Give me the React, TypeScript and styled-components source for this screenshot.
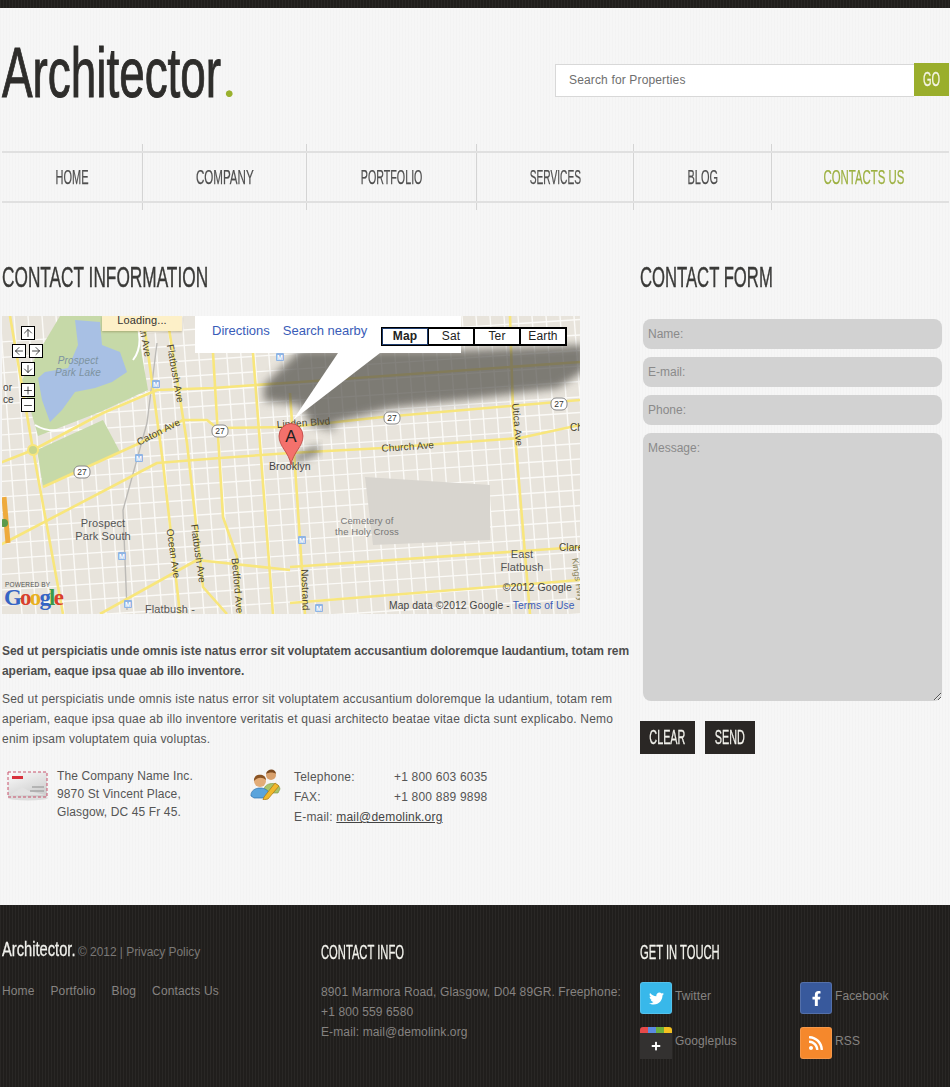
import React from "react"
import styled, { createGlobalStyle } from "styled-components"
import { ArrowDown, ArrowLeft, ArrowRight, ArrowUp, Minus, Plus } from "lucide-react"
import { FaFacebookF, FaPlus, FaRss, FaTwitter } from "react-icons/fa"

const condensed = `"Liberation Sans Narrow", "Liberation Sans", sans-serif`

const GlobalStyle = createGlobalStyle`
  html, body { margin: 0; padding: 0; }
  body {
    font-family: "Liberation Sans", Arial, sans-serif;
    font-size: 12px;
    letter-spacing: 0.12px;
    color: #555;
    background-color: #f6f6f6;
    background-image: repeating-linear-gradient(90deg, rgba(0,0,0,.012) 0 1px, transparent 1px 3px);
  }
`

const navItems = [
  { label: "HOME", width: 141, scale: 0.55 },
  { label: "COMPANY", width: 164, scale: 0.58 },
  { label: "PORTFOLIO", width: 170, scale: 0.535 },
  { label: "SERVICES", width: 157, scale: 0.51 },
  { label: "BLOG", width: 138, scale: 0.55 },
  { label: "CONTACTS US", width: 177, scale: 0.57, active: true }
]

function range(from: number, to: number, step: number) {
  const out: number[] = []
  for (let v = from; v <= to; v += step) out.push(v)
  return out
}

const yellowRoads = [
  "M10 316 L33 450 L63 614",
  "M0 463 L33 450 L103 413 L157 390 L213 388 L300 382 L580 362",
  "M43 487 L140 443 L183 420 L207 420 L217 428 L290 427 L383 417 L580 400",
  "M0 545 L10 540 L157 463 L220 458 L290 453 L383 448 L520 438 L580 425",
  "M143 316 L163 463 L180 614",
  "M167 316 L187 443 L203 587 L227 614",
  "M213 353 L223 517 L237 557 L240 614",
  "M253 353 L273 614",
  "M290 393 L305 614",
  "M510 316 L513 410 L530 614",
  "M290 567 L580 547",
  "M100 614 L197 560 L290 570",
  "M290 603 L580 580"
]

const labels: { t: string; x: number; y: number; r?: number; s?: number; c?: string; a?: "middle" | "start" | "end"; i?: boolean }[] = [
  { t: "Prospect", x: 78, y: 364, s: 10, c: "#7d93a0", a: "middle", i: true },
  { t: "Park Lake", x: 78, y: 376, s: 10, c: "#7d93a0", a: "middle", i: true },
  { t: "Caton Ave", x: 160, y: 435, r: -27, s: 10, c: "#4a4630", a: "middle" },
  { t: "Flatbush Ave", x: 172, y: 374, r: 80, s: 10, c: "#4a4630", a: "middle" },
  { t: "an Ave", x: 142, y: 342, r: 80, s: 10, c: "#4a4630", a: "middle" },
  { t: "Ocean Ave", x: 170, y: 554, r: 82, s: 10, c: "#4a4630", a: "middle" },
  { t: "Flatbush Ave", x: 195, y: 554, r: 82, s: 10, c: "#4a4630", a: "middle" },
  { t: "Bedford Ave", x: 234, y: 586, r: 85, s: 10, c: "#4a4630", a: "middle" },
  { t: "Prospect", x: 103, y: 527, s: 11, a: "middle" },
  { t: "Park South", x: 103, y: 540, s: 11, a: "middle" },
  { t: "Flatbush -", x: 170, y: 613, s: 11, a: "middle" },
  { t: "Brooklyn", x: 269, y: 470, s: 10.5, c: "#444" },
  { t: "Linden Blvd", x: 277, y: 428, r: -4, s: 10, c: "#4a4630" },
  { t: "Church Ave", x: 408, y: 450, r: -4, s: 10, c: "#4a4630", a: "middle" },
  { t: "Utica Ave", x: 514, y: 425, r: 85, s: 10, c: "#4a4630", a: "middle" },
  { t: "Cemetery of", x: 367, y: 524, s: 9.5, c: "#777", a: "middle" },
  { t: "the Holy Cross", x: 367, y: 535, s: 9.5, c: "#777", a: "middle" },
  { t: "East", x: 522, y: 558, s: 11, a: "middle" },
  { t: "Flatbush", x: 522, y: 571, s: 11, a: "middle" },
  { t: "©2012 Google", x: 572, y: 591, s: 10.5, c: "#444", a: "end" },
  { t: "Clare", x: 559, y: 551, s: 10, c: "#4a4630" },
  { t: "Ch", x: 570, y: 431, s: 10, c: "#4a4630" },
  { t: "Nostrand", x: 302, y: 590, r: 88, s: 10, c: "#4a4630", a: "middle" },
  { t: "Kings Hwy", x: 575, y: 580, r: 82, s: 9, c: "#8a8560", a: "middle" },
  { t: "or", x: 3, y: 391, s: 10, c: "#444" },
  { t: "ce", x: 3, y: 403, s: 10, c: "#444" }
]

const shields = [
  [82, 472],
  [220, 431],
  [392, 418],
  [559, 404]
]

const metros = [
  [156, 384],
  [139, 458],
  [122, 556],
  [128, 604],
  [280, 357],
  [302, 540],
  [319, 608]
]

function MapDrawing() {
  return (
    <MapSvg viewBox="2 316 578 298" width="578" height="298">
      <defs>
        <filter id="blur" x="-10%" y="-30%" width="120%" height="160%">
          <feGaussianBlur stdDeviation="4" />
        </filter>
      </defs>
      <rect x="0" y="316" width="580" height="298" fill="#e8e4dc" />
      <g stroke="#fbfaf7" strokeWidth="1.4" fill="none">
        {range(326, 640, 15.5).map(y => (
          <line key={y} x1="0" y1={y + 16} x2="580" y2={y - 22} />
        ))}
        {range(0, 590, 14).map(x => (
          <line key={x} x1={x} y1="316" x2={x + 22} y2="614" />
        ))}
      </g>
      <path d="M365 477 L490 485 L490 540 L373 545 Z" fill="#d8d5cf" />
      <path d="M60 316 L135 316 L148 390 L100 412 L38 436 L22 380 Z" fill="#c6d9a8" />
      <path d="M37 450 L103 420 L120 452 L43 487 Z" fill="#c6d9a8" />
      <path
        d="M75 320 L100 322 L102 345 L120 352 L127 372 L112 382 L95 388 L75 392 L62 410 L50 422 L42 400 L38 378 L45 372 L68 368 L78 345 Z"
        fill="#a8c0e4"
      />
      <path d="M35 425 Q60 440 103 413 L150 392 M135 316 Q145 345 133 360" stroke="#fff" strokeWidth="2" fill="none" />
      <path d="M157 343 L147 423 L123 510 L127 610" stroke="#bcbab6" strokeWidth="1.4" fill="none" />
      <g stroke="#f8e67c" strokeWidth="2.6" fill="none" strokeLinejoin="round">
        {yellowRoads.map(d => (
          <path key={d} d={d} />
        ))}
      </g>
      <circle cx="33" cy="450" r="5" fill="#c8d58c" stroke="#f8e67c" strokeWidth="2" />
      <path d="M4 497 L8 543" stroke="#eeaa3c" strokeWidth="5" />
      <circle cx="4" cy="523" r="4" fill="#5c9a4c" />
      <path
        d="M300 350 L470 350 L585 345 L585 370 L558 388 L480 398 L390 408 L330 424 L338 432 L312 425 L300 405 L264 401 L264 385 Z"
        fill="#55524e"
        opacity=".72"
        filter="url(#blur)"
      />
      <path d="M292 458 L318 445 L320 452 L298 462 Z" fill="#4a4844" opacity=".75" filter="url(#blur)" />
      {shields.map(([x, y]) => (
        <g key={x}>
          <rect x={x - 8} y={y - 6} width="16" height="12" rx="5" fill="#fff" stroke="#888" />
          <text x={x} y={y + 3} fontSize="8.5" fill="#333" textAnchor="middle" fontFamily="Liberation Sans">
            27
          </text>
        </g>
      ))}
      {metros.map(([x, y]) => (
        <g key={x}>
          <rect x={x - 4} y={y - 4} width="8" height="8" rx="1" fill="#8fb4e4" />
          <text x={x} y={y + 3} fontSize="7" fontWeight="bold" fill="#fff" textAnchor="middle" fontFamily="Liberation Sans">
            M
          </text>
        </g>
      ))}
      {labels.map(l => (
        <text
          key={l.t + l.x}
          x={l.x}
          y={l.y}
          fontSize={l.s || 10}
          fill={l.c || "#555"}
          textAnchor={l.a || "start"}
          fontStyle={l.i ? "italic" : "normal"}
          fontFamily="Liberation Sans"
          transform={l.r ? `rotate(${l.r} ${l.x} ${l.y})` : undefined}
        >
          {l.t}
        </text>
      ))}
      <path
        d="M291 465 C289 452 279 447 279 436 A12 12.5 0 1 1 303 436 C303 447 293 452 291 465 Z"
        fill="#f4716c"
        stroke="#b8403c"
        strokeWidth=".8"
      />
      <text x="291" y="442" fontSize="17" fill="#222" textAnchor="middle" fontFamily="Liberation Sans">
        A
      </text>
      <text x="389" y="609" fontSize="10.25" fill="#444" fontFamily="Liberation Sans">
        Map data ©2012 Google - <tspan fill="#3a5cb8">Terms of Use</tspan>
      </text>
      <text x="5" y="587" fontSize="6.5" fill="#555" fontFamily="Liberation Sans">
        POWERED BY
      </text>
      <text x="4" y="605" fontSize="23" fontWeight="bold" fontFamily="Liberation Serif" textLength="60">
        <tspan fill="#3564c4">G</tspan>
        <tspan fill="#d8402c">o</tspan>
        <tspan fill="#e8b020">o</tspan>
        <tspan fill="#3564c4">g</tspan>
        <tspan fill="#3a9a48">l</tspan>
        <tspan fill="#d8402c">e</tspan>
      </text>
    </MapSvg>
  )
}

function EnvelopeIcon() {
  return (
    <svg width="42" height="32" viewBox="0 0 42 32">
      <defs>
        <linearGradient id="envelope" x1="0" y1="0" x2="0.6" y2="1">
          <stop offset="0" stopColor="#fbfbfb" />
          <stop offset="1" stopColor="#cfcfcf" />
        </linearGradient>
      </defs>
      <ellipse cx="21" cy="28" rx="20" ry="2.5" fill="#ddd" />
      <rect x="1" y="2" width="39" height="25" fill="url(#envelope)" stroke="#c8506a" strokeDasharray="3 2" />
      <rect x="5" y="6" width="11" height="3" fill="#d8323c" />
      <path d="M3 25 L15 17 L22 21 L38 25 Z" fill="#e2e2e2" />
      <path d="M25 17 H37 M23 21 H37" stroke="#8d8d8d" strokeWidth="1.2" />
    </svg>
  )
}

function PeopleIcon() {
  return (
    <svg width="32" height="32" viewBox="0 0 32 32">
      <path d="M14 22 C14 14 29 13 30 21 L28 25 H16 Z" fill="#a8c46c" stroke="#78923c" strokeWidth=".6" />
      <circle cx="21" cy="7" r="5" fill="#d8a06c" />
      <path d="M16 6 C17 0 26 0 26 6 C24 4 19 4 16 6 Z" fill="#7c4a20" />
      <path d="M1 28 C0 18 18 17 20 27 L17 30 H4 Z" fill="#5aa4dc" stroke="#2c70ac" strokeWidth=".7" />
      <circle cx="10" cy="13" r="6" fill="#e2ac78" />
      <path d="M4 13 C3 5 16 5 16 12 C12 9 8 9 4 13 Z" fill="#8a5424" />
      <path d="M14 29 L25 15 L29 18 L18 31 L13 32 Z" fill="#f0b82c" stroke="#a87414" strokeWidth=".7" />
    </svg>
  )
}

export default function App() {
  return (
    <>
      <GlobalStyle />
      <TopBar />
      <Header>
        <Logo href="#">
          Architector<LogoDot>.</LogoDot>
        </Logo>
        <SearchForm>
          <SearchInput placeholder="Search for Properties" />
          <SearchButton type="button">
            <span>GO</span>
          </SearchButton>
        </SearchForm>
      </Header>
      <Nav>
        {navItems.map(item => (
          <NavItem key={item.label} $width={item.width} $active={item.active}>
            <span style={{ transform: `scaleX(${item.scale})` }}>{item.label}</span>
          </NavItem>
        ))}
      </Nav>
      <Main>
        <section>
          <Heading $scale={0.595}>CONTACT INFORMATION</Heading>
          <MapBox>
            <MapDrawing />
            <LoadingBox>Loading...</LoadingBox>
            <MapControls>
              <MapButton $col={2} $row={1}><ArrowUp size={12} /></MapButton>
              <MapButton $col={1} $row={2}><ArrowLeft size={12} /></MapButton>
              <MapButton $col={3} $row={2}><ArrowRight size={12} /></MapButton>
              <MapButton $col={2} $row={3}><ArrowDown size={12} /></MapButton>
              <MapButton $col={2} $row={4} $gap><Plus size={13} /></MapButton>
              <MapButton $col={2} $row={5}><Minus size={13} /></MapButton>
            </MapControls>
            <InfoWindow>
              <InfoLink>Directions</InfoLink>
              <InfoLink>Search nearby</InfoLink>
            </InfoWindow>
            <InfoTail />
            <MapTypes>
              <MapType $active>Map</MapType>
              <MapType>Sat</MapType>
              <MapType>Ter</MapType>
              <MapType>Earth</MapType>
            </MapTypes>
          </MapBox>
          <Lead>
            Sed ut perspiciatis unde omnis iste natus error sit voluptatem accusantium doloremque laudantium, totam rem
            aperiam, eaque ipsa quae ab illo inventore.
          </Lead>
          <Body>
            Sed ut perspiciatis unde omnis iste natus error sit voluptatem accusantium doloremque la udantium, totam rem
            aperiam, eaque ipsa quae ab illo inventore veritatis et quasi architecto beatae vitae dicta sunt explicabo. Nemo
            enim ipsam voluptatem quia voluptas.
          </Body>
          <ContactRow>
            <AddressBlock>
              <EnvelopeIcon />
              <Address>
                The Company Name Inc.
                <br />
                9870 St Vincent Place,
                <br />
                Glasgow, DC 45 Fr 45.
              </Address>
            </AddressBlock>
            <PhoneBlock>
              <PeopleIcon />
              <PhoneTable>
                <span>Telephone:</span>
                <span>+1 800 603 6035</span>
                <span>FAX:</span>
                <span>+1 800 889 9898</span>
                <PhoneEmail>
                  E-mail: <a href="#">mail@demolink.org</a>
                </PhoneEmail>
              </PhoneTable>
            </PhoneBlock>
          </ContactRow>
        </section>
        <section>
          <Heading $scale={0.575}>CONTACT FORM</Heading>
          <Form>
            <Field placeholder="Name:" />
            <Field placeholder="E-mail:" />
            <Field placeholder="Phone:" />
            <MessageField placeholder="Message:" />
          </Form>
          <FormButtons>
            <DarkButton type="button" $width={55}>
              <span>CLEAR</span>
            </DarkButton>
            <DarkButton type="button" $width={50}>
              <span>SEND</span>
            </DarkButton>
          </FormButtons>
        </section>
      </Main>
      <Footer>
        <FooterColumn>
          <FooterBrand>
            <FooterLogo>Architector.</FooterLogo>
            <span>© 2012 | Privacy Policy</span>
          </FooterBrand>
          <FooterLinks>
            <a href="#">Home</a>
            <a href="#">Portfolio</a>
            <a href="#">Blog</a>
            <a href="#">Contacts Us</a>
          </FooterLinks>
        </FooterColumn>
        <FooterColumn>
          <FooterHeading>CONTACT INFO</FooterHeading>
          <FooterText>
            8901 Marmora Road, Glasgow, D04 89GR. Freephone:
            <br />
            +1 800 559 6580
            <br />
            E-mail: mail@demolink.org
          </FooterText>
        </FooterColumn>
        <FooterColumn>
          <FooterHeading>GET IN TOUCH</FooterHeading>
          <SocialGrid>
            <SocialItem>
              <SocialTile $bg="#38b8ea"><FaTwitter size={15} /></SocialTile>
              Twitter
            </SocialItem>
            <SocialItem>
              <SocialTile $bg="#38599c"><FaFacebookF size={15} /></SocialTile>
              Facebook
            </SocialItem>
            <SocialItem>
              <GoogleTile><FaPlus size={10} /></GoogleTile>
              Googleplus
            </SocialItem>
            <SocialItem>
              <SocialTile $bg="#f5882c"><FaRss size={16} /></SocialTile>
              RSS
            </SocialItem>
          </SocialGrid>
        </FooterColumn>
      </Footer>
    </>
  )
}

const darkStripes = `
  background-color: #232120;
  background-image: repeating-linear-gradient(90deg, #292725 0 1px, #201e1c 1px 3px);
`

const TopBar = styled.div`
  height: 8px;
  ${darkStripes}
`

const Header = styled.header`
  height: 136px;
  display: flex;
  justify-content: space-between;
  padding: 0 1px 0 2px;
`

const Logo = styled.a`
  display: inline-block;
  margin-top: 25px;
  height: 80px;
  font-family: ${condensed};
  font-size: 70px;
  line-height: 80px;
  letter-spacing: 0;
  color: #2e2d2b;
  -webkit-text-stroke: 1px #2e2d2b;
  text-decoration: none;
  transform: scaleX(0.655);
  transform-origin: left;
  white-space: nowrap;
`

const LogoDot = styled.span`
  display: inline-block;
  font-family: Lato, sans-serif;
  font-size: 44px;
  font-weight: bold;
  color: #9ab12e;
  -webkit-text-stroke: 0;
  margin-left: 4px;
  transform: scaleX(1.53);
  transform-origin: left;
`

const SearchForm = styled.form`
  display: flex;
  margin: 55px 0 0;
  height: 34px;
`

const SearchInput = styled.input`
  width: 359px;
  height: 33px;
  margin-top: 1px;
  box-sizing: border-box;
  padding: 0 13px 2px;
  border: 1px solid #d8d8d8;
  border-right: 0;
  background: #fff;
  font: 12px "Liberation Sans", sans-serif;
  letter-spacing: 0.15px;
  &::placeholder {
    color: #6e6e6e;
    opacity: 1;
  }
`

const SearchButton = styled.button`
  width: 35px;
  height: 33px;
  border: 0;
  padding: 0;
  background: #9aae2c;
  color: #f4f4e4;
  font-family: ${condensed};
  font-size: 20px;
  span {
    display: inline-block;
    transform: scaleX(0.55);
    -webkit-text-stroke: 0.3px #f4f4e4;
  }
`

const Nav = styled.nav`
  display: flex;
  margin: 0 1px 0 2px;
  height: 66px;
  box-sizing: border-box;
  position: relative;
  &::before,
  &::after {
    content: "";
    position: absolute;
    left: 0;
    right: 0;
    height: 2px;
    background: #e0e0e0;
  }
  &::before {
    top: 7px;
  }
  &::after {
    bottom: 7px;
  }
`

const NavItem = styled.div<{ $width: number; $active?: boolean }>`
  width: ${p => p.$width}px;
  flex: none;
  display: flex;
  align-items: center;
  justify-content: center;
  box-sizing: border-box;
  padding-left: ${p => (p.$active ? "7px" : "0")};
  border-right: ${p => (p.$active ? "0" : "1px solid #d4d4d4")};
  font-family: ${condensed};
  font-size: 20px;
  letter-spacing: 0;
  color: ${p => (p.$active ? "#9cb040" : "#4f4f4f")};
  span {
    display: inline-block;
    -webkit-text-stroke: 0.25px currentColor;
    white-space: nowrap;
  }
`

const Main = styled.main`
  height: 695px;
  display: grid;
  grid-template-columns: 638px 1fr;
  padding-left: 2px;
  box-sizing: border-box;
`

const Heading = styled.h2<{ $scale: number }>`
  margin: 52px 0 23px;
  height: 31px;
  font-family: ${condensed};
  font-size: 29px;
  line-height: 31px;
  font-weight: normal;
  letter-spacing: 0;
  color: #3a3a38;
  -webkit-text-stroke: 0.4px #3a3a38;
  transform: scaleX(${p => p.$scale});
  transform-origin: left;
  white-space: nowrap;
`

const MapBox = styled.div`
  position: relative;
  width: 578px;
  height: 298px;
  overflow: hidden;
`

const MapSvg = styled.svg`
  display: block;
`

const LoadingBox = styled.div`
  position: absolute;
  left: 100px;
  top: 0;
  width: 80px;
  height: 15px;
  background: #fdf0c8;
  box-shadow: 0 1px 2px rgba(120, 100, 40, 0.4);
  text-align: center;
  font-size: 11px;
  line-height: 8px;
  color: #333;
`

const MapControls = styled.div`
  position: absolute;
  left: 10px;
  top: 10px;
  display: grid;
  grid-template-columns: 9px 8px 14px;
  grid-auto-rows: 14px;
  row-gap: 4px;
`

const MapButton = styled.div<{ $col: number; $row: number; $gap?: boolean }>`
  grid-column: ${p => p.$col};
  grid-row: ${p => p.$row};
  margin-top: ${p => (p.$gap ? "3px" : "0")};
  width: 14px;
  height: 14px;
  box-sizing: border-box;
  border: 1px solid #000;
  background: #fff;
  display: flex;
  align-items: center;
  justify-content: center;
  color: #111;
  svg {
    stroke-width: 1.5;
  }
`

const InfoWindow = styled.div`
  position: absolute;
  left: 193px;
  top: 0;
  width: 266px;
  height: 37px;
  box-sizing: border-box;
  padding: 7px 0 0 17px;
  background: #fff;
  display: flex;
  gap: 13px;
`

const InfoLink = styled.span`
  color: #3a5cb8;
  font-size: 13px;
  letter-spacing: 0;
  line-height: 16px;
`

const InfoTail = styled.div`
  position: absolute;
  left: 291px;
  top: 37px;
  width: 90px;
  height: 67px;
  background: #fff;
  clip-path: polygon(45px 0, 87px 0, 0 67px);
`

const MapTypes = styled.div`
  position: absolute;
  left: 379px;
  top: 11px;
  display: flex;
  border: 1px solid #000;
  background: #fff;
`

const MapType = styled.div<{ $active?: boolean }>`
  width: 46px;
  height: 17px;
  box-sizing: border-box;
  border: 1px solid ${p => (p.$active ? "#1c3a6c" : "#000")};
  text-align: center;
  font-size: 12px;
  line-height: 15px;
  font-weight: ${p => (p.$active ? "bold" : "normal")};
  color: #222;
`

const Lead = styled.p`
  margin: 27px 0 8px;
  font-size: 12px;
  line-height: 20px;
  font-weight: bold;
  letter-spacing: -0.06px;
  color: #4e4e4e;
`

const Body = styled.p`
  margin: 0;
  font-size: 12px;
  line-height: 20px;
  letter-spacing: 0.21px;
  width: 626px;
  color: #555;
`

const ContactRow = styled.div`
  display: flex;
  margin-top: 17px;
`

const AddressBlock = styled.div`
  width: 248px;
  display: flex;
  gap: 8px;
  padding: 4px 0 0 5px;
  box-sizing: border-box;
  align-items: flex-start;
`

const Address = styled.div`
  line-height: 18px;
  margin-top: -3px;
`

const PhoneBlock = styled.div`
  display: flex;
  gap: 12px;
  align-items: flex-start;
  padding-top: 2px;
`

const PhoneTable = styled.div`
  display: grid;
  grid-template-columns: 100px auto;
  line-height: 20px;
  margin-top: -1px;
  letter-spacing: 0.2px;
`

const PhoneEmail = styled.div`
  grid-column: 1 / span 2;
  a {
    color: #444;
  }
`

const Form = styled.form`
  display: flex;
  flex-direction: column;
  gap: 8px;
  padding: 3px 0 0 3px;
  width: 299px;
`

const fieldStyles = `
  width: 299px;
  box-sizing: border-box;
  border: 0;
  border-radius: 8px;
  background: #d2d2d2;
  padding: 0 5px;
  font: 12px "Liberation Sans", sans-serif;
  color: #555;
  &::placeholder {
    color: #8a8a8a;
    opacity: 1;
  }
`

const Field = styled.input`
  ${fieldStyles}
  height: 30px;
`

const MessageField = styled.textarea`
  ${fieldStyles}
  height: 268px;
  padding-top: 8px;
  display: block;
`

const FormButtons = styled.div`
  display: flex;
  gap: 10px;
  margin-top: 20px;
`

const DarkButton = styled.button<{ $width: number }>`
  width: ${p => p.$width}px;
  height: 33px;
  border: 0;
  padding: 0;
  background: #2a2725;
  color: #f2f2ec;
  font-family: ${condensed};
  font-size: 20px;
  span {
    display: inline-block;
    margin: 0 -20px;
    transform: scaleX(0.54);
    -webkit-text-stroke: 0.3px #f2f2ec;
  }
`

const Footer = styled.footer`
  height: 182px;
  box-sizing: border-box;
  padding: 32px 0 0 2px;
  display: grid;
  grid-template-columns: 319px 319px 1fr;
  ${darkStripes}
  color: #868381;
`

const FooterColumn = styled.div`
  min-width: 0;
`

const FooterBrand = styled.div`
  display: flex;
  align-items: baseline;
  height: 20px;
  font-size: 12px;
  letter-spacing: -0.05px;
  color: #7a7876;
`

const FooterLogo = styled.span`
  display: inline-block;
  width: 76px;
  font-family: ${condensed};
  font-size: 21px;
  letter-spacing: 0;
  color: #f2f2ee;
  -webkit-text-stroke: 0.3px #f2f2ee;
  transform: scaleX(0.7);
  transform-origin: left;
  white-space: nowrap;
`

const FooterLinks = styled.div`
  display: flex;
  gap: 16px;
  margin-top: 27px;
  a {
    color: #868381;
    text-decoration: none;
  }
`

const FooterHeading = styled.h3`
  margin: 2px 0 0;
  height: 26px;
  font-family: ${condensed};
  font-size: 20px;
  line-height: 26px;
  font-weight: normal;
  letter-spacing: 0;
  color: #f4f4ee;
  -webkit-text-stroke: 0.3px #f4f4ee;
  transform: scaleX(0.56);
  transform-origin: left;
  white-space: nowrap;
`

const FooterText = styled.div`
  margin-top: 17px;
  line-height: 20px;
  white-space: nowrap;
`

const SocialGrid = styled.div`
  display: grid;
  grid-template-columns: 160px 1fr;
  grid-auto-rows: 45px;
  margin-top: 17px;
`

const SocialItem = styled.div`
  display: flex;
  align-items: flex-start;
  gap: 3px;
  line-height: 28px;
  color: #868381;
`

const SocialTile = styled.span<{ $bg: string }>`
  width: 32px;
  height: 32px;
  flex: none;
  border-radius: 3px;
  background: ${p => p.$bg};
  display: flex;
  align-items: center;
  justify-content: center;
  color: #fff;
  box-sizing: border-box;
  border: 1px solid rgba(255, 255, 255, 0.14);
`

const GoogleTile = styled.span`
  width: 32px;
  height: 32px;
  flex: none;
  border-radius: 3px 3px 0 0;
  background: linear-gradient(90deg, #e64a4a 25%, #5a8ae0 25% 50%, #6cb03c 50% 75%, #f4c020 75%) top / 100% 6px no-repeat,
    #333130;
  display: flex;
  align-items: center;
  justify-content: center;
  padding-top: 6px;
  box-sizing: border-box;
  color: #fff;
`
